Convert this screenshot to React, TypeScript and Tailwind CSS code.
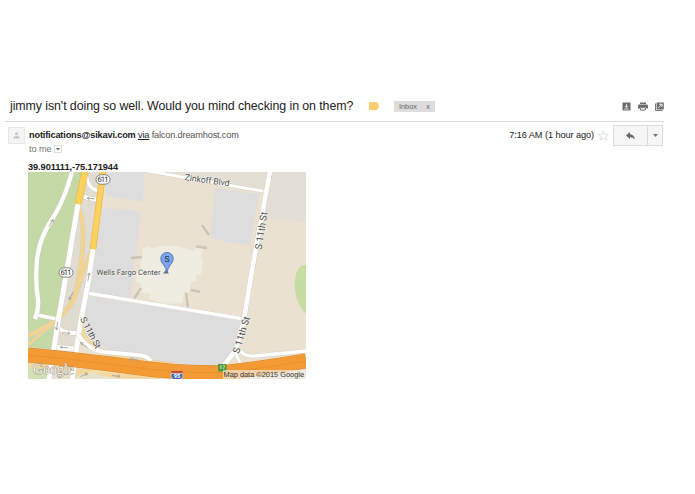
type RoadProps = {
    d: string;
    width: number;
    color?: string;
};

const Road = ({ d, width, color = "#ffffff" }: RoadProps) => (
    <>
        <path d={d} fill="none" stroke="#d5cfc4" strokeWidth={width + 0.9} strokeLinejoin="round" />
        <path d={d} fill="none" stroke={color} strokeWidth={width} strokeLinejoin="round" />
    </>
);

const Shield = ({ x, y }: { x: number; y: number }) => (
    <g>
        <rect x={x - 7} y={y - 4.7} width="14" height="9.4" rx="4.7" fill="#fff" stroke="#777" strokeWidth="0.9" />
        <text x={x} y={y + 2.7} textAnchor="middle" fontSize="7.6" textLength="11" fill="#333">611</text>
    </g>
);

// small one-way markers on the side streets
const arrows = [
    { x: 51, y: 223, r: -57 },
    { x: 91, y: 198.5, r: 185 },
    { x: 71, y: 296, r: 118 },
    { x: 57, y: 326, r: 98 },
    { x: 66, y: 333, r: 5 },
    { x: 64, y: 347.5, r: 185 },
    { x: 88.5, y: 277, r: -80 },
    { x: 84, y: 345, r: 215 },
    { x: 84, y: 375, r: -25 },
    { x: 116, y: 376, r: 5 },
    { x: 134, y: 359.5, r: 187 },
];

const HIGHWAY = "M28 355Q80 360 125 366Q180 374 225 372.5Q265 368 306 361";

const Map = () => (
    <svg
        className="block h-[207px] w-[278px] font-[Roboto,sans-serif]"
        viewBox="28 172 278 207"
        textRendering="geometricPrecision"
    >
        <rect x="28" y="172" width="278" height="208" fill="#ebe1d1" />

        {/* parks */}
        <path d="M28 172H86L70 270L55 350L28 347Z" fill="#c5d9a6" />
        <path d="M306 265Q299 264 296 274Q293 286 297 299Q300 308 306 314Z" fill="#c5dca3" />

        {/* blocks */}
        <path d="M84 172H106L93 250L72 352H56L68 270L78 204Z" fill="#e0dcd2" />
        <path d="M104 172H145L143 202L106 196Z" fill="#dddddd" />
        <path d="M103 207L141 212L130 299L88 292Z" fill="#dddddd" />
        <path d="M145 172H269L264 192L180 177Z" fill="#e4dfd5" />
        <path d="M270 172H306V223L262 218Z" fill="#e3dfd7" />
        <path d="M215 188L259 194L250 246L210 238Z" fill="#dddddd" />
        <path d="M86 296L244 320L237 350L221 367L170 367L115 354L86 334Z" fill="#dddddd" />
        <path d="M28 371L145 379V380H28Z" fill="#e8e1ce" />
        <path d="M28 361L50 365L48 380H28Z" fill="#d3dfb5" />
        <path d="M215 379L306 367V380H215Z" fill="#ecdfca" />

        {/* arena */}
        <path
            d="M143 248L149 246L150 249L158 247Q171 244 184 248L195 251V246L203 248L201 257L203 262L201 274L196 275V281L191 282L189 292H184L182 303L165 304L149 299L150 294L140 292L141 283L136 282L137 272L140 270Z"
            fill="#efede1"
        />
        <g stroke="#c9c4b8" strokeWidth="2.4">
            <path d="M202 225L209 235" />
            <path d="M196 246.5L207 248" />
            <path d="M131 258L142 257" />
            <path d="M141 288L134 299" />
            <path d="M186 293L188 308" />
            <path d="M191 290L200 292" />
        </g>

        {/* ramps */}
        <Road d="M77 204Q84 218 83 238Q82 272 73 299Q69 310 58 319Q46 327 28 336" width={3.8} color="#f3d48e" />
        <Road d="M28 345Q44 330 60 320" width={2.4} color="#f3d48e" />
        <Road d="M93 248Q82 272 77 290Q73 305 65 311" width={4} color="#f3d48e" />
        <Road d="M82 323Q82 343 100 350Q120 360 174 364" width={3.5} color="#f3d99e" />
        <path d="M28 365Q90 371 160 378M68 379Q80 370 92 371Q112 378 145 377" fill="none" stroke="#f3d79a" strokeWidth="3" />
        <path d="M84 375Q100 368 126 374" fill="none" stroke="#f6e0b0" strokeWidth="3" />

        {/* streets */}
        <Road d="M72 172L68 185Q62 204 51 221Q39 239 37 260Q35 281 38 300Q39 309 35 319" width={4.2} />
        <Road d="M37 315L57 319" width={3.4} />
        <Road d="M86 172Q87 190 100 191" width={3.5} />
        <Road d="M84 197L98 200" width={4} />
        <Road d="M57 326Q63 334 77 333" width={4} />
        <Road d="M54 347L74 349" width={5} />
        <Road d="M87 293L244 319" width={3.4} />
        <Road d="M78 204L67 270L58 322L49 380" width={5} />
        <Road d="M93 249L89 278L80 325L72 380" width={5} />
        <Road d="M78 334Q86 349 104 352L138 355Q148 356 151 361" width={4} />
        <Road d="M148 171L268 192" width={3} />
        <Road d="M270 171L252 270L244 319L236 350L221 369" width={4.6} />
        <Road d="M237 348Q244 357 255 356L306 351" width={3.4} />
        <Road d="M235 352L240 363" width={3} />
        <path d="M85 172L78 204" stroke="#f0b83d" strokeWidth="7" />
        <path d="M103 172L93 249" stroke="#e9b244" strokeWidth="6.4" />
        <path d="M85 172L78 204" stroke="#fad15c" strokeWidth="5.8" />
        <path d="M103 172L93 249" stroke="#fad15c" strokeWidth="5.2" />

        {/* highway */}
        <path d={HIGHWAY} fill="none" stroke="#d98b30" strokeWidth="15" />
        <path d={HIGHWAY} fill="none" stroke="#f39a34" strokeWidth="14" />
        <path d={HIGHWAY} fill="none" stroke="#e88b25" strokeWidth="0.7" />

        {arrows.map(({ x, y, r }) => (
            <path
                key={`${x}-${y}`}
                transform={`translate(${x} ${y}) rotate(${r})`}
                d="M-4 0H4M1.5 -1.5L4 0L1.5 1.5"
                fill="none"
                stroke="#aaa69f"
                strokeWidth="0.9"
            />
        ))}

        <Shield x={103} y={179.5} />
        <Shield x={66} y={272.5} />

        {/* labels */}
        <g fill="#4b4b4b" stroke="#ffffff" strokeOpacity="0.6" strokeWidth="1.2" paintOrder="stroke">
            <text transform="translate(184.5 180) rotate(8)" fontSize="8.6" textLength="45">Zinkoff Blvd</text>
            <text transform="translate(261.5 250) rotate(-81)" fontSize="9.6" textLength="38">S 11th St</text>
            <text transform="translate(239 354) rotate(-73)" fontSize="9.6" textLength="38">S 11th St</text>
            <text transform="translate(80 319) rotate(62)" fontSize="9" textLength="34">S 11th St</text>
            <text x="96.5" y="275" fontSize="7.7" textLength="64">Wells Fargo Center</text>
        </g>

        {/* pin */}
        <path d="M163 273.5L166 270L169 273.5Z" fill="#666f86" />
        <path
            d="M167 273Q166.4 268 163.3 264.5Q160.7 262 160.7 258.7A6.3 6.3 0 0 1 173.3 258.7Q173.3 262 170.7 264.5Q167.6 268 167 273Z"
            fill="#7aa5ee"
            stroke="#4c6da8"
            strokeWidth="0.8"
        />
        <text x="167" y="261.8" textAnchor="middle" fontSize="8.5" fill="#1c2a44">S</text>

        {/* interstate shield */}
        <path d="M171.5 373.5H182.5Q184 378 180 379.5H174Q170 378 171.5 373.5Z" fill="#3f69b1" stroke="#fff" strokeWidth="0.5" />
        <path d="M171.5 371H182.5V373H171.5Z" fill="#c0483d" />
        <text x="177" y="378" textAnchor="middle" fontSize="5.6" fontWeight="700" fill="#fff">95</text>
        <rect x="218" y="364" width="8.5" height="7.5" fill="#4c9a3c" />
        <text x="222.2" y="369.4" textAnchor="middle" fontSize="5" fontWeight="700" fill="#e8f3df">17</text>

        <rect x="223" y="370" width="83" height="10" fill="#f5f0e8" fillOpacity="0.65" />
        <text x="223.5" y="377" fontSize="7.4" textLength="80.5" fill="#333" className="font-['Liberation_Sans',sans-serif]">
            Map data ©2015 Google
        </text>
        <text
            x="33"
            y="373.5"
            fontSize="15"
            textLength="41"
            lengthAdjust="spacingAndGlyphs"
            fill="#f8f4ea"
            stroke="#8f8980"
            strokeWidth="0.9"
            paintOrder="stroke"
            className="font-['Liberation_Serif',serif]"
        >
            Google
        </text>
    </svg>
);

const Toolbar = () => (
    <div className="flex items-center gap-[7px] text-[#6c6c6c]">
        <svg className="h-[9px] w-[9px]" viewBox="0 0 9 9">
            <rect x="0.5" y="0.5" width="8" height="8" rx="0.8" fill="currentColor" />
            <path d="M4.5 1.8V5M2.8 4L4.5 5.7L6.2 4M2.3 7H6.7" fill="none" stroke="#fff" strokeWidth="0.8" />
        </svg>
        <svg className="h-[9px] w-[10px]" viewBox="0 0 10 9">
            <path d="M2 0.5H8V2H2ZM1.3 2.6H8.7Q10 2.6 10 4V6.5H8V5H2V6.5H0V4Q0 2.6 1.3 2.6Z" fill="currentColor" />
            <path d="M2.6 5.6H7.4V8H2.6Z" fill="#fff" stroke="currentColor" strokeWidth="1" />
        </svg>
        <svg className="h-[9px] w-[9px]" viewBox="0 0 9 9">
            <path d="M0.5 1.5V8.5H7.5" fill="none" stroke="currentColor" strokeWidth="0.9" />
            <rect x="1.6" y="0.5" width="7.2" height="7" fill="currentColor" />
            <path d="M3.2 6L6.8 2.4M4.2 2.2H7V5" fill="none" stroke="#fff" strokeWidth="0.9" />
        </svg>
    </div>
);

const App = () => (
    <div className="h-[494px] w-[695px] overflow-hidden bg-white pt-[97px] font-['Liberation_Sans',sans-serif] text-[#222]">
        <div className="ml-[5px] flex h-[25px] w-[659px] items-start border-b border-[#dcdcdc] pl-[5px]">
            <h1 className="w-[343px] whitespace-nowrap text-[12.4px] leading-[18px] tracking-[-0.085px]">
                jimmy isn't doing so well. Would you mind checking in on them?
            </h1>
            <svg className="mt-[5px] ml-4 h-2 w-[10px]" viewBox="0 0 10 8">
                <path d="M0 0H7.5Q8.5 0 10 4Q8.5 8 7.5 8H0Z" fill="#f9cd6e" />
            </svg>
            <div className="mt-[4px] ml-[15px] flex h-[11px] w-[41px] items-center justify-between bg-[#ddd] px-[5px] text-[7.3px] leading-none text-[#666]">
                <span>Inbox</span>
                <span>x</span>
            </div>
            <div className="mt-[5px] ml-auto">
                <Toolbar />
            </div>
        </div>

        <div className="ml-2 flex w-[655px] items-start pt-[3px]">
            <div className="mt-[2px] flex h-[17px] w-[17px] items-center justify-center border border-[#e6e6e6] bg-[#f5f5f5]">
                <svg className="h-[7px] w-[7px]" viewBox="0 0 7 7" fill="#c6c6c6">
                    <circle cx="3.5" cy="1.8" r="1.5" />
                    <path d="M0.3 6.5V5.5Q0.5 4 3.5 4Q6.5 4 6.7 5.5V6.5Z" />
                </svg>
            </div>
            <div className="ml-[4px] pt-[3px] text-[9.2px] leading-[14px] whitespace-nowrap">
                <div className="tracking-[-0.165px]">
                    <span className="font-bold">notifications@sikavi.com</span>{" "}
                    <span className="underline">via</span>{" "}
                    <span className="text-[#555]">falcon.dreamhost.com</span>
                </div>
                <div className="flex items-center tracking-[-0.1px] text-[#777]">
                    to me
                    <span className="ml-[3px] flex h-2 w-2 items-center justify-center border border-[#ddd]">
                        <svg className="h-[3px] w-1" viewBox="0 0 4 3">
                            <path d="M0 0H4L2 2.5Z" fill="#666" />
                        </svg>
                    </span>
                </div>
            </div>
            <div className="ml-auto flex items-center">
                <span className="text-[9.2px] tracking-[-0.08px] whitespace-nowrap">7:16 AM (1 hour ago)</span>
                <svg className="ml-[4px] h-[11px] w-[11px]" viewBox="0 0 11 11">
                    <path d="M5.5 0.8L6.9 4.2L10.5 4.4L7.7 6.7L8.7 10.2L5.5 8.2L2.3 10.2L3.3 6.7L0.5 4.4L4.1 4.2Z" fill="#fff" stroke="#d8d8d8" strokeWidth="0.8" />
                </svg>
                <div className="ml-[4px] flex h-[21px] w-[50px] border border-[#dcdcdc] bg-[#f6f6f6]">
                    <div className="flex w-[34px] items-center justify-center border-r border-[#dcdcdc]">
                        <svg className="h-[8px] w-[9px]" viewBox="0 0 9 8">
                            <path d="M4 0V2.2Q8.3 2.4 8.9 7.5Q7.3 4.9 4 4.9V7L0 3.5Z" fill="#666" />
                        </svg>
                    </div>
                    <div className="flex flex-1 items-center justify-center">
                        <svg className="h-[3px] w-[5px]" viewBox="0 0 5 3">
                            <path d="M0 0H5L2.5 3Z" fill="#777" />
                        </svg>
                    </div>
                </div>
            </div>
        </div>

        <div className="ml-7 pt-[5px]">
            <p className="h-[11px] text-[9.2px] leading-[13px] font-bold tracking-[-0.05px]">39.901111,-75.171944</p>
            <Map />
        </div>
    </div>
);

export default App;
